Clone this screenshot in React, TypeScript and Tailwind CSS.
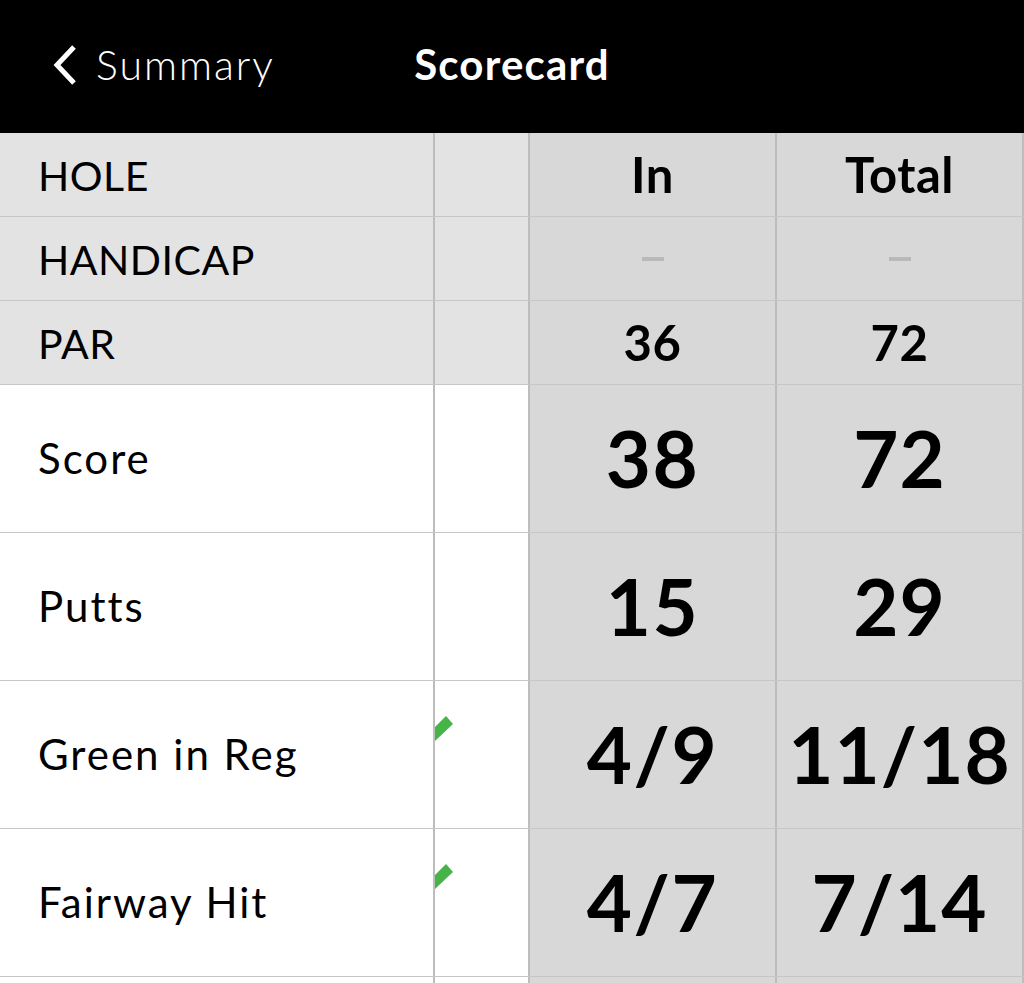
import React from "react";

const font = { fontFamily: "Lato, 'Noto Sans', sans-serif" };

function Flag() {
  return (
    <svg className="absolute left-0 top-[34px]" width="24" height="30" viewBox="0 0 24 30">
      <polygon points="0,12 11,1 18,9 0,26" fill="#46b446" />
    </svg>
  );
}

type HeadRow = { label: string; inV: React.ReactNode; totV: React.ReactNode };

function Dash() {
  return <div className="w-[22px] h-[4px] bg-[#b9b9b9]" />;
}

function SmallRow({ label, inV, totV }: HeadRow) {
  return (
    <div className="flex h-[84px] border-b border-[#c6c6c6]">
      <div className="w-[433px] bg-[#e3e3e3] flex items-center pl-[38px] pt-[2px] text-[41px] tracking-[0.5px] text-black">{label}</div>
      <div className="w-[95px] bg-[#e3e3e3] border-l-2 border-[#bdbdbd]" />
      <div className="w-[247px] bg-[#d8d8d8] border-l-2 border-[#bdbdbd] flex items-center justify-center text-[49px] font-bold text-black tracking-[0.5px]">
        {inV}
      </div>
      <div className="flex-1 bg-[#d8d8d8] border-l-2 border-r-2 border-[#bdbdbd] flex items-center justify-center text-[49px] font-bold text-black tracking-[0.5px]">
        {totV}
      </div>
    </div>
  );
}

function BigRow({ label, inV, totV, flag }: { label: string; inV: string; totV: string; flag?: boolean }) {
  return (
    <div className="flex h-[148px] border-b border-[#c6c6c6]">
      <div className="w-[433px] bg-white flex items-center pl-[38px] text-[42px] tracking-[2px] text-black">{label}</div>
      <div className="w-[95px] bg-white border-l-2 border-[#bdbdbd] relative">{flag && <Flag />}</div>
      <div className="w-[247px] bg-[#d8d8d8] border-l-2 border-[#bdbdbd] flex items-center justify-center text-[78px] font-bold text-black tracking-[1.5px]">
        {inV}
      </div>
      <div className="flex-1 bg-[#d8d8d8] border-l-2 border-r-2 border-[#bdbdbd] flex items-center justify-center text-[78px] font-bold text-black tracking-[1px]">
        {totV}
      </div>
    </div>
  );
}

export default function App() {
  return (
    <div className="w-[1024px] h-[983px] overflow-hidden bg-white" style={font}>
      <div className="h-[133px] bg-black relative flex items-center">
        <div className="flex items-center pl-[52px] pb-[4px]">
          <svg width="28" height="42" viewBox="0 0 28 42">
            <polyline points="22,3 5,21 22,39" fill="none" stroke="white" strokeWidth="5" />
          </svg>
          <span className="ml-[16px] text-[41px] text-white font-light tracking-[2px]">Summary</span>
        </div>
        <div className="absolute inset-0 flex items-center justify-center pb-[4px]">
          <span className="text-[42px] text-white font-bold tracking-[1.2px]">Scorecard</span>
        </div>
      </div>
      <SmallRow label="HOLE" inV="In" totV="Total" />
      <SmallRow label="HANDICAP" inV={<Dash />} totV={<Dash />} />
      <SmallRow label="PAR" inV="36" totV="72" />
      <BigRow label="Score" inV="38" totV="72" />
      <BigRow label="Putts" inV="15" totV="29" />
      <BigRow label="Green in Reg" inV="4/9" totV="11/18" flag />
      <BigRow label="Fairway Hit" inV="4/7" totV="7/14" flag />
      <BigRow label="" inV="" totV="" />
    </div>
  );
}
